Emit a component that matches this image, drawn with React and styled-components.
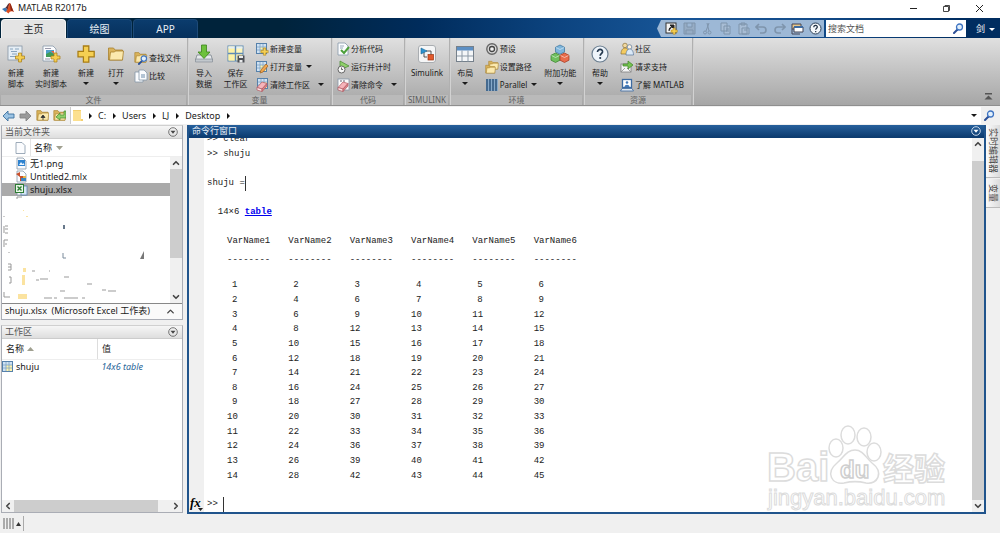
import styled, { createGlobalStyle, css } from 'styled-components';
import { ChevronUp, ChevronDown, ChevronLeft, ChevronRight } from 'lucide-react';

const GlobalStyle = createGlobalStyle`
  * {
    box-sizing: border-box;
  }
  body {
    margin: 0;
    background: #f0f0f0;
    color: #1a1a1a;
    font-family: 'Noto Sans', 'Noto Sans CJK SC', sans-serif;
    font-size: 9px;
    line-height: 12px;
  }
  button, input {
    font: inherit;
    color: inherit;
  }
  button {
    border: 0;
    padding: 0;
    background: none;
    white-space: nowrap;
  }
  svg {
    display: block;
    flex: none;
  }
`;

const Window = styled.div`
  height: 100vh;
  display: flex;
  flex-direction: column;
`;

const TitleBar = styled.header`
  height: 18px;
  flex: none;
  display: flex;
  align-items: center;
  gap: 4px;
  padding: 0 6px 2px 2px;
  background: #fff;
  h1 {
    flex: 1;
    margin: 0;
    font-size: 9px;
    font-weight: 400;
  }
`;

const WindowButton = styled.button`
  width: 29px;
  height: 16px;
  display: grid;
  place-items: center;
`;

const TabBar = styled.div`
  height: 20px;
  flex: none;
  display: flex;
  align-items: flex-end;
  gap: 1px;
  padding-left: 1px;
  background: linear-gradient(90deg, #00233b 28%, #002c5c 42%, #0c4480 56%, #185698 68%, #124a88 82%, #002d60 96%);
`;

const Tab = styled.button`
  width: 65px;
  height: 19px;
  border-radius: 4px 4px 0 0;
  font-size: 10px;
  color: #e8eef5;
  background: linear-gradient(#0b3c6d, #06305c);
  border: 1px solid #1d4a78;
  border-bottom: 0;
  ${({ $active }) => $active && css`
    color: #222;
    background: #e4e4e4;
    border-color: #f4f4f4;
  `}
`;

const QuickAccess = styled.div`
  height: 17px;
  margin: 0 1px 1px auto;
  padding-left: 5px;
  display: flex;
  align-items: center;
  background: #9db8d6;
  clip-path: polygon(4px 0, 100% 0, 100% 100%, 4px 100%, 0 50%);
`;

const QuickButton = styled.button`
  width: 18px;
  height: 16px;
  display: grid;
  place-items: center;
  &:disabled {
    opacity: 0.4;
  }
`;

const DocSearch = styled.label`
  width: 140px;
  height: 17px;
  margin-bottom: 1px;
  padding: 0 2px;
  display: flex;
  align-items: center;
  background: #fff;
  input {
    flex: 1;
    min-width: 0;
    border: 0;
    padding: 0;
    background: none;
    outline: none;
  }
  input::placeholder {
    color: #555;
    opacity: 1;
  }
`;

const UserButton = styled.button`
  width: 33px;
  height: 18px;
  padding-left: 4px;
  display: flex;
  align-items: center;
  justify-content: center;
  gap: 4px;
  color: #fff;
`;

const Caret = styled.span`
  display: block;
  width: 0;
  height: 0;
  border: 3px solid transparent;
  border-top-color: currentColor;
  border-bottom: 0;
`;

const SideCaret = styled.span`
  width: 0;
  height: 0;
  border: 3px solid transparent;
  border-left: 3px solid #111;
  border-right: 0;
`;

const Toolstrip = styled.div`
  height: 68px;
  flex: none;
  display: flex;
  font-size: 8px;
  line-height: 11px;
  background: linear-gradient(#e0e0e0, #c8c8c8 40%, #a6a6a6);
  border-bottom: 1px solid #8f8f8f;
`;

const Group = styled.section`
  width: ${({ $w }) => $w}px;
  display: flex;
  flex-direction: column;
  border-right: 1px solid #b0b0b0;
  box-shadow: 1px 0 0 #d2d2d2;
  h2 {
    height: 10px;
    margin: 1px 1px 0;
    font-size: 8px;
    font-weight: 400;
    line-height: 10px;
    text-align: center;
    color: #5e5e5e;
    background: #bababa;
  }
`;

const GroupBody = styled.div`
  height: 56px;
  display: flex;
  padding-top: 1px;
`;

const BigButton = styled.button`
  width: ${({ $w }) => $w}px;
  padding-top: 5px;
  display: flex;
  flex-direction: column;
  align-items: center;
  svg {
    margin-bottom: 3px;
  }
  ${Caret} {
    margin-top: 4px;
  }
`;

const SmallColumn = styled.div`
  display: flex;
  flex-direction: column;
  justify-content: center;
  padding-left: 4px;
`;

const SmallButton = styled.button`
  height: 18px;
  display: flex;
  align-items: center;
  svg {
    margin-right: 1px;
  }
  ${Caret} {
    margin-left: ${({ $far }) => ($far ? 8 : 4)}px;
  }
`;

const CollapseButton = styled.button`
  width: 13px;
  margin: auto 3px 4px auto;
`;

const AddressRow = styled.nav`
  height: 19px;
  flex: none;
  display: flex;
  align-items: center;
  padding: 1px 2px 1px 0;
`;

const NavButton = styled.button`
  width: 17px;
  height: 15px;
  display: grid;
  place-items: center;
`;

const AddressBox = styled.div`
  flex: 1;
  height: 17px;
  margin-left: 2px;
  display: flex;
  align-items: center;
  gap: 6px;
  padding: 0 4px 0 2px;
  background: #fff;
  border-left: 1px solid #ccc;
  a {
    color: inherit;
    text-decoration: none;
  }
  button {
    margin-left: auto;
  }
`;

const Main = styled.main`
  flex: 1;
  min-height: 0;
  display: grid;
  grid-template-columns: 182px minmax(0, 1fr) 14px;
  grid-template-rows: minmax(0, 1fr);
  padding-left: 1px;
`;

const Sidebar = styled.div`
  display: grid;
  grid-template-rows: minmax(0, 31fr) minmax(0, 30fr);
  gap: 5px;
  padding-bottom: 1px;
`;

const Panel = styled.section`
  min-height: 0;
  display: flex;
  flex-direction: column;
  background: #fff;
  border: 1px solid #aaadb5;
  border-top-color: #d0d0d0;
`;

const PanelHeader = styled.div`
  height: 13px;
  flex: none;
  display: flex;
  align-items: center;
  justify-content: space-between;
  padding: 0 4px 0 3px;
  color: #555;
  background: linear-gradient(#f6f6f6, #dedede);
  border-bottom: 1px solid #ccc;
  h2 {
    margin: 0;
    font-size: 9px;
    font-weight: 400;
  }
`;

const FileHead = styled.div`
  height: 18px;
  flex: none;
  display: flex;
  align-items: center;
  gap: 4px;
  padding-left: 13px;
  border-bottom: 1px solid #eee;
  span {
    padding-left: 3px;
    border-left: 1px solid #e4e4e4;
    line-height: 17px;
  }
`;

const ScrollArea = styled.div`
  flex: 1;
  min-height: 0;
  display: flex;
`;

const FileList = styled.ul`
  flex: 1;
  min-width: 0;
  margin: 0;
  padding: 0;
  list-style: none;
  overflow: hidden;
`;

const FileRow = styled.li`
  height: 13px;
  display: flex;
  align-items: center;
  gap: 2px;
  padding-left: 13px;
  background: ${({ $selected }) => ($selected ? '#aaa' : 'none')};
`;

const ScrollTrack = styled.div`
  flex: none;
  display: flex;
  flex-direction: ${({ $horizontal }) => ($horizontal ? 'row' : 'column')};
  ${({ $horizontal }) => ($horizontal ? 'height: 12px;' : 'width: 12px;')}
  background: #f0f0f0;
  button {
    flex: none;
    width: 12px;
    height: 12px;
    display: grid;
    place-items: center;
    color: #444;
  }
`;

const ScrollSpace = styled.div`
  flex: ${({ $grow }) => $grow};
`;

const ScrollThumb = styled(ScrollSpace)`
  background: #cdcdcd;
`;

const DetailBar = styled.div`
  height: 16px;
  flex: none;
  display: flex;
  align-items: center;
  justify-content: space-between;
  padding: 0 6px 0 3px;
  border-top: 1px solid #888;
  white-space: pre;
  background: #fafafa;
`;

const VarTable = styled.table`
  width: 100%;
  align-self: flex-start;
  border-collapse: collapse;
  table-layout: fixed;
  th {
    height: 21px;
    padding: 0 4px;
    font-weight: 400;
    text-align: left;
    border-bottom: 1px solid #eee;
  }
  th + th {
    border-left: 1px solid #ddd;
  }
  td {
    height: 14px;
    padding: 0;
  }
  td + td {
    padding-left: 4px;
    font-style: italic;
    color: #2a6699;
  }
`;

const IconLabel = styled.span`
  display: flex;
  align-items: center;
  gap: ${({ $gap }) => $gap}px;
`;

const CommandWindow = styled.section`
  margin-left: 4px;
  min-height: 0;
  display: flex;
  flex-direction: column;
  border: 2px solid #20548c;
  border-top: 0;
  background: #fff;
  position: relative;
`;

const CommandHeader = styled(PanelHeader)`
  padding: 0 3px;
  color: #e6eef6;
  background: linear-gradient(#27609c, #0d3c70);
  border-bottom-color: #0d3c70;
`;

const Gutter = styled.div`
  width: 15px;
  flex: none;
  display: flex;
  align-items: flex-end;
  background: #f0f0f0;
`;

const Console = styled.div`
  flex: 1;
  min-width: 0;
  display: flex;
  flex-direction: column;
  justify-content: flex-end;
  padding-left: 3px;
  overflow: hidden;
  font-family: 'Liberation Mono', monospace;
  line-height: 15px;
  color: #222;
`;

const Line = styled.div`
  flex: none;
  height: 15px;
  margin-bottom: ${({ $gap }) => ($gap ? 14 : 0)}px;
  display: flex;
  white-space: pre;
  a {
    color: #0000ee;
    font-weight: 700;
  }
`;

const TextCursor = styled.span`
  border-left: 1px solid #333;
`;

const OutputTable = styled.table`
  flex: none;
  width: 368px;
  height: 249px;
  margin: 0 0 14px 20px;
  border-collapse: collapse;
  table-layout: fixed;
  th, td {
    padding: 0;
  }
  th {
    height: 44px;
    padding-bottom: 10px;
    font-weight: 400;
    text-align: left;
    line-height: 15px;
  }
  th span {
    display: block;
    margin-top: 4px;
  }
  td {
    padding-right: 51px;
    text-align: right;
    line-height: 14px;
  }
`;

const Watermark = styled.svg`
  position: absolute;
  right: 36px;
  bottom: 0;
  pointer-events: none;
`;

const SideTabs = styled.div`
  display: flex;
  flex-direction: column;
  gap: 1px;
`;

const SideTab = styled.button`
  height: ${({ $h }) => $h}px;
  writing-mode: vertical-rl;
  text-orientation: sideways;
  text-align: center;
  color: #444;
  background: linear-gradient(90deg, #fafafa, #dcdcdc);
  border-bottom: 1px solid #bbb;
`;

const StatusBar = styled.footer`
  height: 19px;
  flex: none;
  display: flex;
  align-items: center;
  padding: 2px 3px;
  button {
    height: 15px;
    display: flex;
    align-items: center;
    gap: 1px;
    padding-right: 2px;
    border-right: 1px solid #aaa;
  }
`;

// ---- icons ----

const Plus = ({ x, y, s = 1 }) => (
  <path
    transform={`translate(${x} ${y}) scale(${s})`}
    d="M3 0h3v3h3v3h-3v3h-3v-3h-3v-3h3z"
    fill="#f5cf52"
    stroke="#a97d14"
    strokeWidth="0.7"
  />
);

const Folder = ({ x = 0, y = 0, s = 1 }) => (
  <g transform={`translate(${x} ${y}) scale(${s})`} stroke="#a8812e" strokeWidth="0.8">
    <path d="M1 2h5l1.5 2h7.5v10h-14z" fill="#d9b35c" />
    <path d="M3 6h4l1-1h8l-1 9h-13z" fill="#fbe9ae" />
  </g>
);

const Magnifier = ({ x = 0, y = 0, s = 1 }) => (
  <g transform={`translate(${x} ${y}) scale(${s})`} fill="none">
    <path d="M4.5 6.500 1 10" stroke="#2b4f96" strokeWidth="2" strokeLinecap="round" />
    <circle cx="6.5" cy="4" r="3" fill="#e2f0fc" stroke="#3f74c2" strokeWidth="1.3" />
  </g>
);

const GridSheet = ({ x = 0, y = 0, s = 1 }) => (
  <g transform={`translate(${x} ${y}) scale(${s})`}>
    <rect x="0.5" y="0.5" width="10" height="10" fill="#fff3ac" stroke="#5681ab" />
    <path d="M1 1h9v3h-9zM1 4h3v6h-3z" fill="#cfe2f3" />
    <path d="M4 1v9M7 1v9M1 4h9M1 7h9" stroke="#7ea3c4" strokeWidth="0.8" />
  </g>
);

const Eraser = ({ x = 0, y = 0 }) => (
  <g transform={`translate(${x} ${y})`} stroke="#b25a62" strokeWidth="0.7">
    <path d="M0 5.500 5 0l5 1.500-5 5.500z" fill="#f6b4ba" />
    <path d="M0 5.500l5 1.500v2.500l-5-1.500z" fill="#fbe3e5" />
    <path d="M5 7l5-5.500v2.500l-5 5.500z" fill="#de8289" />
  </g>
);

const Page = ({ x = 0, y = 0, w = 10, h = 12 }) => (
  <path d={`M${x} ${y}h${w - 3}l3 3v${h - 3}h-${w}z`} fill="#fbfcfe" stroke="#8797a8" strokeWidth="0.8" />
);

const bigIcons = {
  script: (
    <>
      <rect x="2" y="2" width="14" height="14" fill="#e6eef5" stroke="#8796a5" strokeWidth="0.8" />
      <path d="M4 5h3M5 7.500h6M6 10h5M4 12.500h6M9 5h4" stroke="#7d9bb8" strokeWidth="0.9" />
      <Plus x="9.5" y="9" />
    </>
  ),
  live: (
    <>
      <Page x={2} y={2} w={13} h={15} />
      <path d="M4 4.500h6M4 15h5" stroke="#99a" />
      <path d="M5 6h8v7h-8z" fill="#4d9fc9" />
      <path d="M5 10l4-2 4 2v3h-8z" fill="#3f9b58" />
      <path d="M10 7h3v3z" fill="#e2683d" />
      <Plus x="10" y="9" />
    </>
  ),
  plus: <Plus x="2" y="2" s={1.8} />,
  folder: <Folder x={1.5} y={2} s={1} />,
  importData: (
    <>
      <path d="M3 11h14l1.500 5h-17z" fill="#e6e9ec" stroke="#7c858e" strokeWidth="0.8" />
      <path d="M1.500 15h17v3h-17z" fill="#c2c8cd" stroke="#7c858e" strokeWidth="0.6" />
      <path d="M7.500 1h5v7h3.500l-6 6.500-6-6.500h3.500z" fill="#6dc13c" stroke="#3b8419" strokeWidth="0.8" />
    </>
  ),
  save: (
    <>
      <rect x="2" y="2" width="15" height="15" fill="#fff6bb" stroke="#5f8bb5" />
      <path d="M2.500 2.500h7v14h-7z" fill="#fff3a6" />
      <path d="M2.500 2.500h14v2h-14z" fill="#e2eef9" />
      <path d="M9.500 2v15M2 9.500h15" stroke="#5f8bb5" strokeWidth="1.4" />
      <path d="M11.500 11.500h7v7h-7z" fill="#4c4f55" />
      <path d="M13 12h4v2h-4zM13.500 16h3v2.500h-3z" fill="#e8eaec" />
    </>
  ),
  simulink: (
    <>
      <rect x="1.5" y="1.5" width="17" height="17" rx="2.5" fill="#f5f6f7" stroke="#a9adb1" />
      <path d="M9 7h5v4M10 13H7V8" fill="none" stroke="#444" strokeWidth="0.9" />
      <path d="M4 4l6 3-6 3z" fill="#2b93d1" stroke="#1c6694" strokeWidth="0.6" />
      <rect x="11" y="10.5" width="5.5" height="5.5" fill="#e2592c" stroke="#9c3513" strokeWidth="0.7" />
    </>
  ),
  layout: (
    <>
      <rect x="1.5" y="2.5" width="17" height="15" fill="#f4f6f8" stroke="#75808b" />
      <path d="M2 3h16v3.500H2z" fill="#5c8fc4" />
      <path d="M7 6.500v11M13 6.500v11M2 12h16" stroke="#8c99a6" />
    </>
  ),
  addons: (
    <g strokeWidth="0.7">
      <path d="M10 1l4.500 2.300v4.600l-4.500 2.300-4.500-2.300v-4.600z" fill="#7fb6dc" stroke="#36719e" />
      <path d="M5.500 9l4.500 2.300v4.900l-4.500 2.300-4.500-2.300v-4.900z" fill="#6fbf5e" stroke="#357f28" />
      <path d="M14.500 9l4.500 2.300v4.900l-4.500 2.300-4.500-2.300v-4.900z" fill="#e86c4c" stroke="#a3371c" />
      <path d="M6 3.500l4 2 4-2M1.500 11.500l4 2 4-2M10.500 11.500l4 2 4-2" fill="none" stroke="#fff" opacity="0.7" />
    </g>
  ),
  help: (
    <>
      <circle cx="10" cy="10" r="8" fill="#eef4fa" stroke="#6b7e90" strokeWidth="1.2" />
      <path d="M7.500 8c0-3.500 5.500-3.300 5 0-.3 1.700-2.300 1.800-2.300 3.800" fill="none" stroke="#24384e" strokeWidth="1.7" />
      <circle cx="10.2" cy="14" r="1.1" fill="#24384e" />
    </>
  ),
};

const smallIcons = {
  find: (
    <>
      <Folder x={0} y={0} s={0.8} />
      <Magnifier x={4} y={4} s={0.9} />
    </>
  ),
  compare: (
    <>
      <Page x={1} y={3} w={8} h={10} />
      <Page x={5} y={1} w={8} h={10} />
      <path d="M7 6h4M7 8h4" stroke="#6c8cab" />
    </>
  ),
  newVar: (
    <>
      <GridSheet x={1} y={1} />
      <Plus x="6" y="6" s={0.8} />
    </>
  ),
  openVar: (
    <>
      <GridSheet x={1} y={1} />
      <path d="M5 13l1-3 5-6 2 2-5 6z" fill="#f0a650" stroke="#9c5f1d" strokeWidth="0.7" />
    </>
  ),
  clearVar: (
    <>
      <GridSheet x={2} y={0} />
      <Eraser x={2} y={4} />
    </>
  ),
  analyze: (
    <>
      <Page x={2} y={1} w={10} h={12} />
      <path d="M4 4h4M4 6h3" stroke="#98a9ba" />
      <path d="M5 8l3 3 5-6" fill="none" stroke="#4da03a" strokeWidth="2" />
    </>
  ),
  runTime: (
    <>
      <path d="M4 1l9 5-9 4z" fill="#8fcf6b" stroke="#44862b" strokeWidth="0.7" />
      <circle cx="5.5" cy="9.5" r="3.5" fill="#f7f7f7" stroke="#666" />
      <path d="M5.500 7.500v2h1.500" fill="none" stroke="#444" strokeWidth="0.8" />
    </>
  ),
  clearCmd: (
    <>
      <rect x="2" y="1" width="11" height="11" fill="#fbfbfb" stroke="#8797a8" strokeWidth="0.8" />
      <path d="M4 3h2M7 3h2" stroke="#667" />
      <Eraser x={2} y={4} />
    </>
  ),
  prefs: (
    <>
      <circle cx="7" cy="7" r="5.2" fill="#dcdcdc" stroke="#666" strokeWidth="1.4" />
      <circle cx="7" cy="7" r="2.5" fill="#f2f2f2" stroke="#444" strokeWidth="1.3" />
    </>
  ),
  path: (
    <>
      <Folder x={3} y={0} s={0.65} />
      <Folder x={0} y={4} s={0.65} />
    </>
  ),
  parallel: (
    <>
      <path d="M1 1h12v12h-12z" fill="#87a9c9" />
      <path d="M2 1v12M5 1v12M8 1v12M11 1v12" stroke="#31567c" strokeWidth="1.5" />
    </>
  ),
  community: (
    <g stroke="#8b7138" strokeWidth="0.7">
      <circle cx="5" cy="3.5" r="2.3" fill="#f2d9a0" />
      <path d="M1 12c0-8 8-8 8 0z" fill="#f4cb60" />
      <circle cx="9.5" cy="5" r="2.3" fill="#fff3e0" stroke="#58779b" />
      <path d="M6 13c0-8 7.500-8 7.500 0z" fill="#dbe9f7" stroke="#58779b" />
    </g>
  ),
  support: (
    <>
      <rect x="1" y="4" width="10" height="8" fill="#f5f5f5" stroke="#7d7d7d" strokeWidth="0.8" />
      <path d="M1 12l4-4M11 12l-4-4" fill="none" stroke="#8d8d8d" strokeWidth="0.8" />
      <path d="M3 4h5v-3l5 4-5 4v-3h-5z" fill="#76c452" stroke="#3d8322" strokeWidth="0.7" />
    </>
  ),
  learn: (
    <>
      <rect x="2.5" y="1.5" width="9" height="8" fill="#fff" stroke="#3d6ba2" strokeWidth="1.3" />
      <circle cx="7" cy="4.5" r="1.3" fill="#4379b8" />
      <path d="M4.500 9c0-3 5-3 5 0z" fill="#4379b8" />
      <path d="M2 10.500h10l1.500 2.500h-13z" fill="#dfe7ef" stroke="#3d6ba2" strokeWidth="0.8" />
    </>
  ),
};

const BigIcon = ({ name }) => <svg width="20" height="20" viewBox="0 0 20 20">{bigIcons[name]}</svg>;
const SmallIcon = ({ name }) => <svg width="14" height="14" viewBox="0 0 14 14">{smallIcons[name]}</svg>;

const Logo = () => (
  <svg width="12" height="12" viewBox="0 0 12 12">
    <path d="M0 7l3.500-1.500L6 8l-2.500 2z" fill="#3f78b4" />
    <path d="M3.500 5.500C5 5 6 1 7.500 1L6 8z" fill="#5c2c32" />
    <path d="M7.500 1C9 1 10 7 12 10 9.500 8.500 8 9 6.500 11.500L4 9.500C6 8 6.500 3 7.500 1z" fill="#d94e22" />
    <path d="M7.500 1C8.500 3 8 7 9 9c1-.5 2 0 3 1C10 7 9 1 7.500 1z" fill="#8c2513" />
  </svg>
);

const PanelMenu = ({ light }) => (
  <svg width="10" height="10" viewBox="0 0 10 10">
    <circle cx="5" cy="5" r="4.3" fill="none" stroke={light ? '#dce8f4' : '#666'} strokeWidth="0.9" />
    <path d="M2.500 3.800h5L5 6.800z" fill={light ? '#fff' : '#444'} />
  </svg>
);

const SortArrow = ({ up }) => (
  <svg width="7" height="4" viewBox="0 0 7 4">
    <path d={up ? 'M0 4h7L3.500 0z' : 'M0 0h7L3.500 4z'} fill="#a0a090" />
  </svg>
);

const quickIcons = [
  {
    label: '快捷方式',
    art: (
      <>
        <rect x="1" y="1" width="10" height="10" fill="#f3f3f3" stroke="#333" />
        <path d="M4 9c0-3 1-4 3-4M5 3h4v4z" fill="#222" stroke="#222" />
        <Plus x="6" y="6" s={0.7} />
      </>
    ),
  },
  {
    label: '保存',
    off: true,
    art: <path d="M1 1h11v11h-11zM4 1v4h5v-4M3 12v-4h7v4" fill="#8d9bab" stroke="#51606f" />,
  },
  {
    label: '剪切',
    off: true,
    art: (
      <g fill="none" stroke="#51606f">
        <path d="M8 1 5 9M6 1l2 8" />
        <circle cx="4" cy="10.5" r="1.5" />
        <circle cx="8.5" cy="10.5" r="1.5" />
      </g>
    ),
  },
  {
    label: '复制',
    off: true,
    art: <path d="M2 1h6v8h-6zM5 4h6v8h-6zM7 7h3M7 9h3" fill="#b9c6d4" stroke="#51606f" />,
  },
  {
    label: '粘贴',
    off: true,
    art: <path d="M2 2h8v10h-8zM4 1h4v2h-4zM5 6h7v6h-7zM7 8h3" fill="#b9c6d4" stroke="#51606f" />,
  },
  {
    label: '撤销',
    off: true,
    art: <path d="M4 2 1 5l3 3M1 5h7c4 0 4 6 0 6h-3" fill="none" stroke="#51606f" strokeWidth="1.6" />,
  },
  {
    label: '重做',
    off: true,
    art: <path d="M9 2l3 3-3 3M12 5H5c-4 0-4 6 0 6h3" fill="none" stroke="#51606f" strokeWidth="1.6" />,
  },
  {
    label: '切换窗口',
    art: (
      <g stroke="#445">
        <path d="M1 2h9v5h-9z" fill="#e8c68a" />
        <path d="M3 5h9v5h-9z" fill="#fff" />
        <path d="M3 5h9" stroke="#3d6ba2" strokeWidth="2" />
        <path d="M1 7v5h8" fill="none" />
      </g>
    ),
  },
  {
    label: '帮助',
    art: (
      <>
        <circle cx="6.5" cy="6.5" r="5.5" fill="#f3f7fb" stroke="#2c4058" />
        <path
          d="M4.800 5.200c0-2.500 3.700-2.300 3.500 0-.2 1-1.600 1.200-1.600 2.500M6.700 9v1.300"
          fill="none"
          stroke="#1c2c40"
          strokeWidth="1.2"
        />
      </>
    ),
  },
];

const FileIcon = ({ kind }) => (
  <svg width="13" height="13" viewBox="0 0 13 13">
    <Page x={2} y={1} w={9} h={11} />
    {kind === 'png' && (
      <>
        <rect x="3" y="3" width="7" height="6" fill="#2f83cf" />
        <path d="M4 8l2-3 1.500 2 1-1 1 2z" fill="#e8f4ff" />
      </>
    )}
    {kind === 'mlx' && (
      <>
        <path d="M1 4l4-2v5zM5 6h5v5h-5z" fill="#c8502c" />
        <path d="M6 8h5v3h-5z" fill="#3c86bf" />
        <path d="M8 6h3v2h-3z" fill="#e4b64a" />
      </>
    )}
    {kind === 'xlsx' && (
      <>
        <rect x="6" y="3" width="6" height="9" fill="#d7e6f5" stroke="#5a83ad" strokeWidth="0.8" />
        <rect x="0.5" y="1.5" width="8" height="8" fill="#e8f5e6" stroke="#2d7d34" />
        <path d="M2.500 3.500l4 4M6.500 3.500l-4 4" stroke="#2d7d34" strokeWidth="1.4" />
      </>
    )}
  </svg>
);

// bits of covered rows that still show in the file list
const ListRemnants = () => (
  <svg width="168" height="106" viewBox="0 0 168 106">
    <g fill="none" stroke="#999" strokeWidth="1">
      <path d="M15 3v-2h5M2 20v1M3 30h3M2 30v7M3 33h3M3 37h3M2 44h4M2 44v7M3 48h2M7 56v1M6 68h3v6h-3M6 71h3M7 81h2v6h-2M2 96v5h6" />
      <path d="M30 75h3M47 75h1M62 81h5M34 84h3M38 83h8M85 88h5M58 95h5M100 94h4M106 95h8M42 102h8M52 102h3M62 102h14M80 102h3" />
    </g>
    <path d="M61 29h2v4h-2z" fill="#68798b" />
    <path d="M61 57v5h3" fill="none" stroke="#7b8b9b" />
    <path d="M138 63l4-8v8z" fill="#777" />
    <path d="M21 72h3v4h-3zM20 79h3v10h-3zM16 98h9v5h-9z" fill="#fbe3a0" />
    <path d="M21 14h1v1h-1zM24 20h2v1h-2z" fill="#fbe3a0" />
  </svg>
);

// ---- data ----

const groups = [
  {
    name: '文件',
    w: 188,
    big: [
      { icon: 'script', w: 32, lines: ['新建', '脚本'] },
      { icon: 'live', w: 38, lines: ['新建', '实时脚本'] },
      { icon: 'plus', w: 32, lines: ['新建'], caret: true },
      { icon: 'folder', w: 28, lines: ['打开'], caret: true },
    ],
    small: [{ icon: 'find', text: '查找文件' }, { icon: 'compare', text: '比较' }],
  },
  {
    name: '变量',
    w: 144,
    big: [
      { icon: 'importData', w: 32, lines: ['导入', '数据'] },
      { icon: 'save', w: 31, lines: ['保存', '工作区'] },
    ],
    small: [
      { icon: 'newVar', text: '新建变量' },
      { icon: 'openVar', text: '打开变量', caret: true },
      { icon: 'clearVar', text: '清除工作区', caret: true, far: true },
    ],
  },
  {
    name: '代码',
    w: 73,
    big: [],
    small: [
      { icon: 'analyze', text: '分析代码' },
      { icon: 'runTime', text: '运行并计时' },
      { icon: 'clearCmd', text: '清除命令', caret: true, far: true },
    ],
  },
  { name: 'SIMULINK', w: 45, big: [{ icon: 'simulink', w: 44, lines: ['Simulink'] }], small: [] },
  {
    name: '环境',
    w: 134,
    big: [{ icon: 'layout', w: 31, lines: ['布局'], caret: true }],
    small: [
      { icon: 'prefs', text: '预设' },
      { icon: 'path', text: '设置路径' },
      { icon: 'parallel', text: 'Parallel', caret: true },
    ],
    after: [{ icon: 'addons', w: 46, lines: ['附加功能'], caret: true }],
  },
  {
    name: '资源',
    w: 109,
    big: [{ icon: 'help', w: 32, lines: ['帮助'], caret: true }],
    small: [
      { icon: 'community', text: '社区' },
      { icon: 'support', text: '请求支持' },
      { icon: 'learn', text: '了解 MATLAB' },
    ],
  },
];

const files = [
  { name: '无1.png', kind: 'png' },
  { name: 'Untitled2.mlx', kind: 'mlx' },
  { name: 'shuju.xlsx', kind: 'xlsx', selected: true },
];

const crumbs = ['C:', 'Users', 'LJ', 'Desktop'];
const columns = ['VarName1', 'VarName2', 'VarName3', 'VarName4', 'VarName5', 'VarName6'];
const rows = Array.from({ length: 14 }, (_, i) => {
  const n = i + 1;
  return [n, 2 * n, 3 * n, 3 * n + 1, 3 * n + 2, 3 * n + 3];
});

const renderBig = (item) => (
  <BigButton key={item.icon} $w={item.w}>
    <BigIcon name={item.icon} />
    {item.lines.map((line) => <span key={line}>{line}</span>)}
    {item.caret && <Caret />}
  </BigButton>
);

const Scrollbar = ({ horizontal, before = 0, thumb, after }) => {
  const Start = horizontal ? ChevronLeft : ChevronUp;
  const End = horizontal ? ChevronRight : ChevronDown;
  return (
    <ScrollTrack $horizontal={horizontal}>
      <button aria-label='向前滚动'><Start size={10} strokeWidth={4} /></button>
      <ScrollSpace $grow={before} />
      <ScrollThumb $grow={thumb} />
      <ScrollSpace $grow={after} />
      <button aria-label='向后滚动'><End size={10} strokeWidth={4} /></button>
    </ScrollTrack>
  );
};

const BaiduMark = () => (
  <Watermark width="182" height="90" viewBox="0 0 182 90" fill="#fff" stroke="#dcdcdc" strokeWidth="1.5">
    <g fontFamily="'Liberation Sans', sans-serif" fontWeight="700">
      <text x="1" y="59" fontSize="40">Bai</text>
      <path d="M89 28c8 0 11 8 17 13 12 9 6 22-6 20-8-2-14-2-22 0-12 2-19-10-7-20 7-6 10-13 18-13z" />
      <ellipse cx="70" cy="26" rx="7" ry="9" />
      <ellipse cx="82" cy="13" rx="7" ry="9" />
      <ellipse cx="98" cy="15" rx="7" ry="9" />
      <ellipse cx="108" cy="30" rx="7" ry="9" />
      <text x="74" y="56" fontSize="24" stroke="#cfcfcf">du</text>
      <text x="2" y="83" fontSize="22" fontWeight="400" strokeWidth="1">jingyan.baidu.com</text>
    </g>
    <text x="117" y="58" fontSize="31" fontWeight="700" fontFamily="'Noto Sans CJK SC', sans-serif">经验</text>
  </Watermark>
);

const App = () => {
  return (
    <Window>
      <GlobalStyle />
      <TitleBar>
        <Logo />
        <h1>MATLAB R2017b</h1>
        <WindowButton aria-label='最小化'>
          <svg width="9" height="9" viewBox="0 0 9 9"><path d="M1 4.500h7" stroke="#222" /></svg>
        </WindowButton>
        <WindowButton aria-label='还原'>
          <svg width="9" height="9" viewBox="0 0 9 9">
            <path d="M1.500 2.500h5v5h-5zM3 2.500v-1h4.500v5h-1" fill="none" stroke="#333" strokeWidth="0.9" />
          </svg>
        </WindowButton>
        <WindowButton aria-label='关闭'>
          <svg width="9" height="9" viewBox="0 0 9 9"><path d="M1 1l7 7M8 1l-7 7" stroke="#222" /></svg>
        </WindowButton>
      </TitleBar>

      <TabBar>
        <Tab $active>主页</Tab>
        <Tab>绘图</Tab>
        <Tab>APP</Tab>
        <QuickAccess>
          {quickIcons.map(({ label, off, art }) => (
            <QuickButton key={label} aria-label={label} disabled={off}>
              <svg width="13" height="13" viewBox="0 0 13 13">{art}</svg>
            </QuickButton>
          ))}
        </QuickAccess>
        <DocSearch>
          <input type='search' aria-label='搜索文档' placeholder='搜索文档' />
          <svg width="11" height="11" viewBox="0 0 11 11"><Magnifier /></svg>
        </DocSearch>
        <UserButton>剑<Caret /></UserButton>
      </TabBar>

      <Toolstrip>
        {groups.map(({ name, w, big, small, after }) => (
          <Group key={name} $w={w}>
            <GroupBody>
              {big.map(renderBig)}
              {small.length > 0 && (
                <SmallColumn>
                  {small.map(({ icon, text, caret, far }) => (
                    <SmallButton key={icon} $far={far}>
                      <SmallIcon name={icon} />
                      {text}
                      {caret && <Caret />}
                    </SmallButton>
                  ))}
                </SmallColumn>
              )}
              {after && after.map(renderBig)}
            </GroupBody>
            <h2>{name}</h2>
          </Group>
        ))}
        <CollapseButton aria-label='折叠'>
          <svg width="9" height="9" viewBox="0 0 9 9"><path d="M1 1h7v1.500h-7zM4.500 3.500l4 4h-8z" fill="#555" /></svg>
        </CollapseButton>
      </Toolstrip>

      <AddressRow>
        <NavButton aria-label='后退'>
          <svg width="13" height="12" viewBox="0 0 13 12">
            <path d="M1 6l5-5v3h6v4h-6v3z" fill="#9cc4e4" stroke="#3b6f9e" strokeWidth="0.9" />
          </svg>
        </NavButton>
        <NavButton aria-label='前进'>
          <svg width="13" height="12" viewBox="0 0 13 12">
            <path d="M12 6l-5-5v3h-6v4h6v3z" fill="#9a9a9a" stroke="#858585" strokeWidth="0.9" />
          </svg>
        </NavButton>
        <NavButton aria-label='上一级'>
          <svg width="13" height="13" viewBox="0 0 13 13">
            <Folder s={0.8} />
            <path d="M7 11v-4M5 8.500l2-2.500 2 2.500z" fill="#333" stroke="#333" strokeWidth="0.8" />
          </svg>
        </NavButton>
        <NavButton aria-label='浏览'>
          <svg width="13" height="13" viewBox="0 0 13 13">
            <Folder s={0.8} />
            <path d="M3 8l4-4v2h4v-4h2v7h-6v2z" fill="#8fcf6b" stroke="#44862b" strokeWidth="0.7" />
          </svg>
        </NavButton>
        <AddressBox>
          <svg width="10" height="13" viewBox="0 0 10 13">
            <path d="M0 1h8v9h2v2h-10z" fill="#f3cf70" />
            <path d="M0 2h8v10h-8z" fill="#fce08f" />
          </svg>
          <SideCaret />
          {crumbs.map((crumb) => (
            <IconLabel key={crumb} $gap={7}>
              <a href='#path'>{crumb}</a>
              <SideCaret />
            </IconLabel>
          ))}
          <button aria-label='历史路径'><Caret /></button>
        </AddressBox>
        <NavButton aria-label='搜索'>
          <svg width="11" height="11" viewBox="0 0 11 11"><Magnifier /></svg>
        </NavButton>
      </AddressRow>

      <Main>
        <Sidebar>
          <Panel>
            <PanelHeader>
              <h2>当前文件夹</h2>
              <PanelMenu />
            </PanelHeader>
            <FileHead>
              <svg width="11" height="12" viewBox="0 0 11 12"><Page x={1} y={0.5} w={9} h={11} /></svg>
              <span>名称</span>
              <SortArrow />
            </FileHead>
            <ScrollArea>
              <FileList>
                {files.map(({ name, kind, selected }) => (
                  <FileRow key={name} $selected={selected}>
                    <FileIcon kind={kind} />
                    {name}
                  </FileRow>
                ))}
                <li aria-hidden='true'><ListRemnants /></li>
              </FileList>
              <Scrollbar thumb={89} after={32} />
            </ScrollArea>
            <DetailBar>
              {'shuju.xlsx  (Microsoft Excel 工作表)'}
              <ChevronUp size={11} strokeWidth={3} color='#444' />
            </DetailBar>
          </Panel>

          <Panel>
            <PanelHeader>
              <h2>工作区</h2>
              <PanelMenu />
            </PanelHeader>
            <ScrollArea>
              <VarTable>
                <colgroup>
                  <col width="53%" />
                  <col />
                </colgroup>
                <thead>
                  <tr>
                    <th>
                      <IconLabel $gap={3}>
                        名称
                        <SortArrow up />
                      </IconLabel>
                    </th>
                    <th>值</th>
                  </tr>
                </thead>
                <tbody>
                  <tr>
                    <td>
                      <IconLabel $gap={3}>
                        <svg width="11" height="11" viewBox="0 0 11 11"><GridSheet /></svg>
                        shuju
                      </IconLabel>
                    </td>
                    <td>14x6 table</td>
                  </tr>
                </tbody>
              </VarTable>
            </ScrollArea>
            <Scrollbar horizontal thumb={145} after={12} />
          </Panel>
        </Sidebar>

        <CommandWindow>
          <CommandHeader>
            <h2>命令行窗口</h2>
            <PanelMenu light />
          </CommandHeader>
          <ScrollArea>
            <Gutter>
              <svg width="15" height="18" viewBox="0 0 15 18">
                <text
                  x="1"
                  y="13"
                  fontFamily="'Liberation Serif', serif"
                  fontStyle="italic"
                  fontWeight="700"
                  fontSize="13"
                >
                  fx
                </text>
                <path d="M9 14h5l-2.500 3z" fill="#222" />
              </svg>
            </Gutter>
            <Console>
              <Line>{'>> clear'}</Line>
              <Line $gap>{'>> shuju'}</Line>
              <Line $gap>shuju =<TextCursor /></Line>
              <Line $gap>{'  14×6 '}<a href='#table'>table</a></Line>
              <OutputTable>
                <thead>
                  <tr>
                    {columns.map((name) => (
                      <th key={name}>
                        {name}
                        <span>--------</span>
                      </th>
                    ))}
                  </tr>
                </thead>
                <tbody>
                  {rows.map((row) => (
                    <tr key={row[0]}>
                      {row.map((value, i) => <td key={columns[i]}>{value}</td>)}
                    </tr>
                  ))}
                </tbody>
              </OutputTable>
              <Line>{'>> '}<TextCursor /></Line>
            </Console>
            <Scrollbar before={11} thumb={330} after={0} />
          </ScrollArea>
          <BaiduMark />
        </CommandWindow>

        <SideTabs>
          <SideTab $h={53}>实时编辑器</SideTab>
          <SideTab $h={29}>变量</SideTab>
        </SideTabs>
      </Main>

      <StatusBar>
        <button aria-label='状态'>
          <svg width="12" height="11" viewBox="0 0 12 11">
            <path d="M1 0v11M4 0v11M7 0v11M10 0v11" stroke="#aaa" strokeWidth="2" />
          </svg>
          <svg width="5" height="4" viewBox="0 0 5 4"><path d="M0 4h5L2.500 0z" fill="#333" /></svg>
        </button>
      </StatusBar>
    </Window>
  );
};
export default App;
